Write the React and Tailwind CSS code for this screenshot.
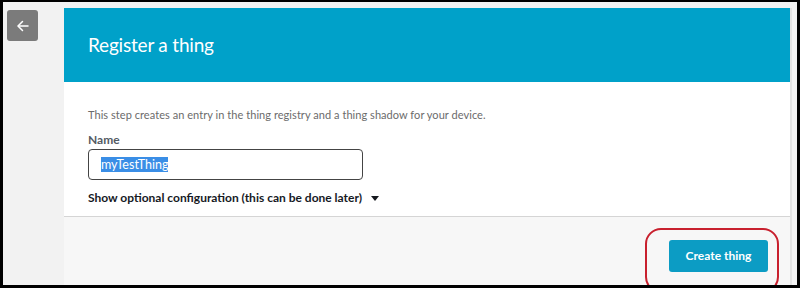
import React from "react";

export default function App() {
  return (
    <div className="w-[800px] h-[288px] overflow-hidden border-black border-t-[2px] border-l-[3px] border-r-[3px] border-b-[3px] bg-[#f2f2f2] flex" style={{ fontFamily: 'Lato, "Open Sans", sans-serif' }}>
      <div className="pl-[4px] pt-[8px] w-[61px] shrink-0">
        <div className="w-[31px] h-[31px] rounded-[3px] bg-[#7b7b7b] flex items-center justify-center">
          <svg width="14" height="14" viewBox="0 0 14 14" fill="none" stroke="white" strokeWidth="1.5" strokeLinecap="round" strokeLinejoin="round">
            <path d="M12 7H2.5" />
            <path d="M6.5 2.5L2 7l4.5 4.5" />
          </svg>
        </div>
      </div>
      <div className="mt-[6px] w-[728px] shrink-0 flex flex-col border-r-[2px] border-[#e2e2e2]">
        <div className="h-[74px] bg-[#00a1c9] flex items-center pl-[24px]">
          <span className="text-white text-[19px] font-normal tracking-[-0.2px]">Register a thing</span>
        </div>
        <div className="h-[135px] bg-white pl-[24px] pt-[25px] border-b border-[#d5d5d5]">
          <p className="text-[11px] leading-[16px] text-[#6b6b6b] tracking-[0.05px]">This step creates an entry in the thing registry and a thing shadow for your device.</p>
          <p className="mt-[9px] text-[12px] leading-[16px] font-bold text-[#545b64]">Name</p>
          <div className="mt-[1px] w-[275px] h-[31px] border border-[#444] rounded-[4px] flex items-center pl-[12px]">
            <span className="bg-[#3a8ee6] text-white text-[12.5px] leading-[15px]">myTestThing</span>
          </div>
          <div className="mt-[10px] flex items-center gap-[9px]">
            <span className="text-[12px] leading-[16px] font-bold text-[#16191f]">Show optional configuration (this can be done later)</span>
            <svg width="8" height="5" viewBox="0 0 8 5"><path d="M0 0h8L4 5z" fill="#16191f" /></svg>
          </div>
        </div>
        <div className="flex-1 bg-[#f7f7f7] flex justify-end pr-[22px] pt-[23px]">
          <div className="relative">
            <button className="w-[99px] h-[32px] rounded-[3px] bg-[#0c9cc4] text-white text-[12px] font-bold">Create thing</button>
            <div className="absolute left-[-24px] right-[-11px] top-[-12px] bottom-[-8px] border-[2px] border-[#c8202e] rounded-[16px]" />
          </div>
        </div>
      </div>
    </div>
  );
}
